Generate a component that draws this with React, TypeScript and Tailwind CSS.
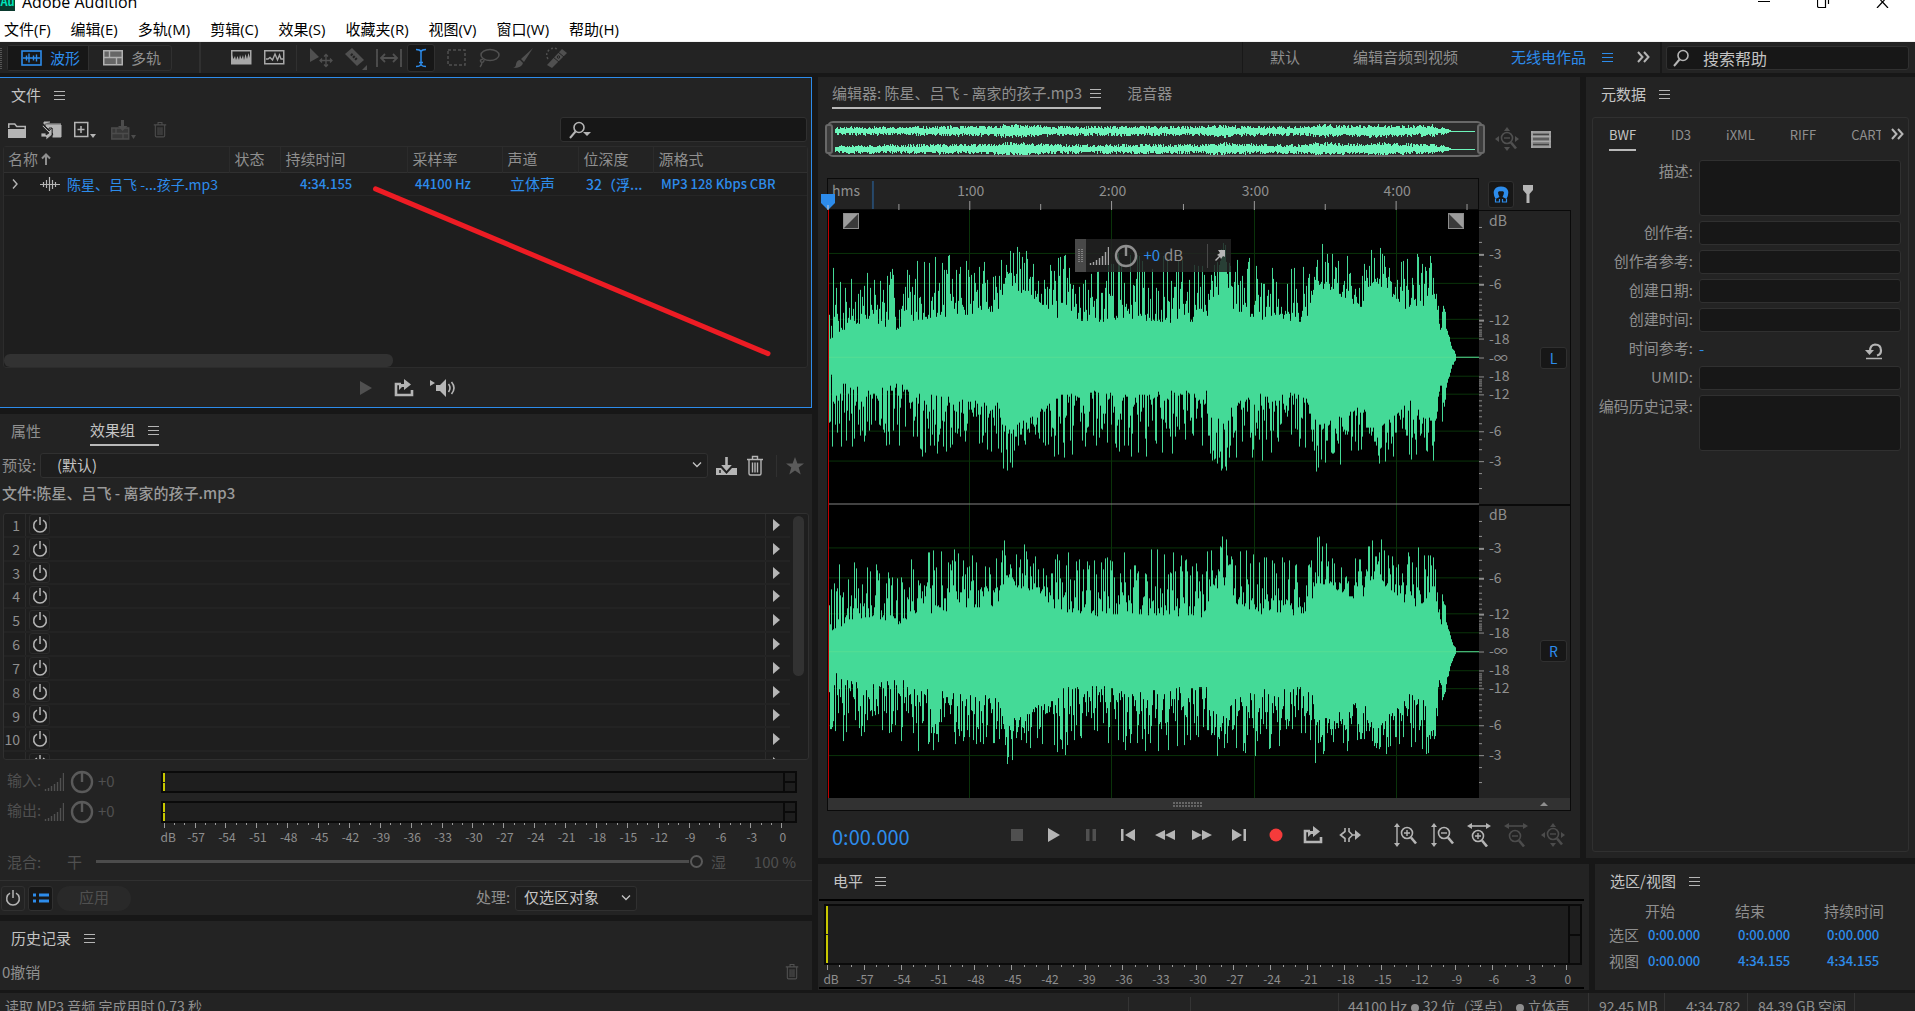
import { useMemo, type ReactNode } from "react";

const MENUS = ["文件(F)", "编辑(E)", "多轨(M)", "剪辑(C)", "效果(S)", "收藏夹(R)", "视图(V)", "窗口(W)", "帮助(H)"];

const WAVE_W = 651;
const WAVE_H = 589;
const CENTERS = [147, 442];
const DB_MARKS = [
  { label: "-3", off: -104 },
  { label: "-6", off: -74 },
  { label: "-12", off: -38 },
  { label: "-18", off: -19 },
  { label: "-∞", off: 0 },
  { label: "-18", off: 19 },
  { label: "-12", off: 37 },
  { label: "-6", off: 74 },
  { label: "-3", off: 104 },
];
const DB_MINOR = [131, 116, 92, 82, 66, 59, 53, 48, 43, 34, 31, 28, 26, 24, 22];
const MINUTES = [142, 284, 427, 569];

// [x, quiet level, peak level], measured from the channel's centre line
const ENVELOPE = [
  [0, 16, 66], [4, 18, 92], [12, 24, 92], [40, 34, 88], [72, 26, 90], [85, 36, 100],
  [120, 40, 104], [140, 42, 98], [170, 46, 98], [175, 66, 116], [180, 74, 116], [190, 62, 110],
  [197, 64, 114], [204, 58, 96], [222, 46, 92], [232, 36, 112], [250, 36, 92], [270, 34, 92],
  [282, 36, 104], [300, 38, 106], [340, 34, 100], [378, 34, 98], [382, 58, 112], [398, 66, 120],
  [404, 48, 100], [430, 36, 106], [446, 40, 100], [470, 34, 90], [484, 44, 94], [488, 68, 119],
  [496, 66, 112], [512, 60, 108], [526, 52, 96], [536, 48, 96], [541, 70, 112], [550, 72, 118],
  [556, 66, 106], [572, 54, 98], [582, 42, 106], [598, 50, 106], [606, 62, 106], [609, 44, 66],
  [611, 28, 44], [613, 26, 34], [614, 44, 72], [617, 38, 56], [618, 28, 34], [621, 18, 22], [624, 8, 11], [628, 1, 2],
];

function random(seed: number) {
  let s = seed;
  return () => {
    s = (s * 1664525 + 1013904223) % 4294967296;
    return s / 4294967296;
  };
}

function levelAt(x: number) {
  for (let i = 1; i < ENVELOPE.length; i++) {
    const a = ENVELOPE[i - 1];
    const b = ENVELOPE[i];
    if (x >= a[0] && x < b[0]) {
      const t = (x - a[0]) / (b[0] - a[0]);
      return [a[1] + (b[1] - a[1]) * t, a[2] + (b[2] - a[2]) * t];
    }
  }
  return [0, 0];
}

function buildWave(center: number, seed: number) {
  const next = random(seed);
  let d = "";
  for (let x = 0; x < 628; x++) {
    const [low, high] = levelAt(x);
    const up = low + (high - low) * Math.pow(next(), 1.6);
    const down = low + (high - low) * Math.pow(next(), 1.6);
    d += `M${x + 0.5} ${Math.round(center - up)}V${Math.round(center + down)}`;
  }
  return d;
}

function buildOverview(center: number, seed: number) {
  const next = random(seed);
  let d = "";
  for (let x = 0; x < 616; x++) {
    const [low, high] = levelAt(x + 8);
    const up = Math.round(low * 0.04 + high * 0.033 * next() + 0.6);
    const down = Math.round(low * 0.04 + high * 0.033 * next() + 0.6);
    d += `M${x + 0.5} ${center - up}V${center + down}`;
  }
  return d;
}

function Icon({ w = 20, h = 20, className = "", children }: { w?: number; h?: number; className?: string; children: ReactNode }) {
  return (
    <svg width={w} height={h} viewBox={`0 0 ${w} ${h}`} fill="none" stroke="currentColor" className={`shrink-0 ${className}`} aria-hidden="true">
      {children}
    </svg>
  );
}

function MenuButton({ className = "text-[#b5b5b5]" }: { className?: string }) {
  return (
    <button aria-label="菜单" className={`h-5 w-[11px] shrink-0 ${className}`}>
      <Icon w={11} h={20}>
        <path d="M0 6.5h11M0 10.5h11M0 14.5h11" />
      </Icon>
    </button>
  );
}

function PanelHeader({ title }: { title: string }) {
  return (
    <header className="flex h-9 shrink-0 items-center gap-[13px] pb-[2px] pl-[11px] text-[#c4c4c4]">
      <h2>{title}</h2>
      <MenuButton />
    </header>
  );
}

function Power() {
  return (
    <Icon w={16} h={18}>
      <path d="M5 4.2a6.3 6.3 0 1 0 6 0M8 1v8" strokeWidth="1.5" />
    </Icon>
  );
}

function Trash({ w = 18 }: { w?: number }) {
  return (
    <svg width={w} height={w + 3} viewBox="0 0 18 21" fill="none" stroke="currentColor" strokeWidth="1.4" aria-hidden="true">
      <path d="M1 4.5h16M6.5 4V1.5h5V4M3 5v13.5q0 1.5 1.5 1.5h9q1.5 0 1.5-1.5V5M6.5 7.5v10M9 7.5v10M11.5 7.5v10" />
    </svg>
  );
}

function Loop() {
  return (
    <Icon>
      <path d="M7 6H2v11h16v-5" strokeWidth="2.6" />
      <path d="M5 12V6h5V1l7 5.5L10 12V9H8z" fill="currentColor" stroke="none" />
    </Icon>
  );
}

function Bars() {
  return (
    <Icon w={20} h={18}>
      <path d="M1.5 18v-2M4.5 18v-3M7.5 18v-5M10.5 18v-7M13.5 18v-9M16.5 18V5M19.5 18V0" strokeWidth="1.4" />
    </Icon>
  );
}

function Knob() {
  return (
    <Icon w={24} h={24}>
      <circle cx="12" cy="12" r="10" strokeWidth="2.4" />
      <path d="M12 3v9" strokeWidth="2.4" />
    </Icon>
  );
}

function Glass({ minus, dir }: { minus?: boolean; dir: "v" | "h" | "all" }) {
  return (
    <Icon w={24} h={24}>
      {dir === "v" && (
        <>
          <path d="M4 3v18" strokeWidth="1.4" />
          <path d="M4 0l3 4H1zM4 24l3-4H1z" fill="currentColor" stroke="none" />
        </>
      )}
      {dir === "h" && (
        <>
          <path d="M3 3h18" strokeWidth="1.6" />
          <path d="M0 3l5-3v6zM24 3l-5-3v6z" fill="currentColor" stroke="none" />
        </>
      )}
      {dir === "all" && <path d="M12 0l3 4H9zM12 24l3-4H9zM0 12l4-3v6zM24 12l-4-3v6z" fill="currentColor" stroke="none" />}
      <g transform={dir === "v" ? "translate(2 -1)" : dir === "h" ? "translate(-1 2)" : "translate(0 0)"}>
        <circle cx="12" cy="11" r="5.500" strokeWidth="1.6" />
        <path d="M16 15.500l5 6" strokeWidth="2.6" />
        <path d={minus ? "M9 11h6" : "M9 11h6M12 8v6"} strokeWidth="1.4" />
      </g>
    </Icon>
  );
}

function Search({ arrow }: { arrow?: boolean }) {
  return (
    <Icon w={24} h={18}>
      <circle cx="10" cy="6.500" r="5" strokeWidth="1.6" />
      <path d="M6.500 10.500L1 17" strokeWidth="2" />
      {arrow && <path d="M14 11h8l-4 4z" fill="currentColor" stroke="none" />}
    </Icon>
  );
}

function DoubleChevron() {
  return (
    <Icon w={13} h={12}>
      <path d="M1 1l4.500 5L1 11M7 1l4.500 5L7 11" strokeWidth="2" />
    </Icon>
  );
}

function ToolButton({ label, children, className = "w-[33px] text-[#505050]" }: { label: string; children: ReactNode; className?: string }) {
  return (
    <button aria-label={label} className={`flex h-7 shrink-0 items-center justify-center ${className}`}>
      {children}
    </button>
  );
}

function TopBar() {
  return (
    <div className="h-[42px] shrink-0 overflow-hidden border-b border-[#f2f2f2] bg-white text-black">
      <div className="flex h-[14px] items-end">
        <span className="mb-[3px] flex h-[11px] w-[15px] items-end justify-center bg-[#0a3a2e] pb-1 text-[11px] leading-3 font-bold text-[#00e4bb]">Au</span>
        <h1 className="ml-[7px] flex-1 font-['Open_Sans','Noto_Sans',sans-serif] text-base leading-6">Adobe Audition</h1>
        <div className="flex h-[14px] items-start gap-[46px] pr-[26px]">
          <button aria-label="最小化">
            <Icon w={13} h={8}><path d="M0 1.500h12" /></Icon>
          </button>
          <button aria-label="最大化">
            <Icon w={13} h={8}><path d="M.5 0v6q0 1.500 1.500 1.500h6.500V0M11.500 0v4" strokeWidth="1.2" /></Icon>
          </button>
          <button aria-label="关闭">
            <Icon w={13} h={8}><path d="M4.500 0L6.500 2l2-2M6.500 2L1 8M6.500 2L12 8" strokeWidth="1.2" /></Icon>
          </button>
        </div>
      </div>
      <nav className="flex gap-5 pt-[3px] pl-1 font-['Open_Sans','Noto_Sans_CJK_SC',sans-serif] text-[15px] leading-[24px]">
        {MENUS.map((m) => (
          <button key={m}>{m}</button>
        ))}
      </nav>
    </div>
  );
}

function Toolbar() {
  return (
    <div className="flex h-[31px] shrink-0 items-center bg-[#232323] text-[#8f8f8f]">
      <Icon w={3} h={22} className="text-[#555]"><path d="M1 1v21" strokeWidth="2" strokeDasharray="1 1" /></Icon>
      <div className="ml-1 flex h-[26px] rounded-[3px] border border-[#303030]">
        <button className="flex w-[81px] items-center gap-2 border-r border-[#303030] bg-[#171717] pl-[13px] text-[#2d8ceb]">
          <Icon w={21} h={16}>
            <rect x="1" y="1" width="19" height="14" strokeWidth="1.6" />
            <path d="M2 8h17M5.500 5.500v5M8 3.500v9M12.500 5.500v5M15.500 4.500v7" strokeWidth="1.4" />
          </Icon>
          波形
        </button>
        <button className="flex w-[82px] items-center gap-2 pl-[14px]">
          <Icon w={20} h={16} className="text-[#b0b0b0]">
            <rect x=".75" y=".75" width="18.500" height="14" fill="#666" strokeWidth="1.5" />
            <path d="M1 7.500h18M6.500 1v6.500M13.500 7.500V15" strokeWidth="1.4" />
          </Icon>
          多轨
        </button>
      </div>
      <div className="ml-[27px] h-full w-[2px] bg-[#303030]" />
      <div className="ml-[24px] flex">
        <ToolButton label="波形显示" className="w-[33px] text-[#a8a8a8]">
          <Icon w={21} h={15}>
            <rect x=".75" y=".75" width="19" height="13" strokeWidth="1.5" />
            <path d="M1 14V5l1.500 4L4 6l1 4 1.500-4L8 10l1-5 1.500 4L12 5l1 5 1.500-6L16 9l1.500-6L19 8v6z" fill="currentColor" stroke="none" />
          </Icon>
        </ToolButton>
        <ToolButton label="频谱显示" className="w-[33px] text-[#a8a8a8]">
          <Icon w={21} h={15}>
            <rect x=".75" y=".75" width="19" height="13" strokeWidth="1.5" />
            <path d="M2 9h2l2-1.500L8.500 10l2.500-6 2.500 6 2-5L17 9h2" strokeWidth="1.4" />
          </Icon>
        </ToolButton>
      </div>
      <div className="mr-[7px] ml-[5px] h-[26px] w-px bg-[#303030]" />
      <div className="flex items-center">
        <ToolButton label="移动工具">
          <Icon w={24} h={22}>
            <path d="M1 1l9 9-9 5z" fill="currentColor" stroke="none" />
            <path d="M11 13.500h12M17 7.500v12M15 9.500l2-2 2 2M15 17.500l2 2 2-2M13 11.500l-2 2 2 2M21 11.500l2 2-2 2" strokeWidth="1.3" />
          </Icon>
        </ToolButton>
        <ToolButton label="切断工具" className="w-[35px] text-[#505050]">
          <Icon w={24} h={24}>
            <path d="M2 8l7-6 12 12-7 6z" fill="currentColor" stroke="none" />
            <path d="M8 8l6 6" stroke="#232323" strokeWidth="2.5" strokeDasharray="2 1" />
            <path d="M24 19v5h-5z" fill="currentColor" stroke="none" />
          </Icon>
        </ToolButton>
        <ToolButton label="滑动工具">
          <Icon w={26} h={20}>
            <path d="M1 1v18M25 1v18M5 10h16M9 6l-4 4 4 4M17 6l4 4-4 4" strokeWidth="1.8" />
          </Icon>
        </ToolButton>
        <ToolButton label="时间选择工具" className="mx-[2px] w-7 rounded-[3px] border border-[#303030] bg-[#171717] text-[#2d8ceb]">
          <Icon w={12} h={20}>
            <path d="M1 1.500q4 0 5 2 1-2 5-2M6 3v14M1 18.500q4 0 5-2 1 2 5 2M4 14.500h4" strokeWidth="1.5" />
          </Icon>
        </ToolButton>
        <ToolButton label="框选工具" className="w-10 text-[#505050]">
          <Icon w={20} h={18}><rect x="1" y="1" width="17" height="15" strokeWidth="1.5" strokeDasharray="3 2" /></Icon>
        </ToolButton>
        <ToolButton label="套索选择工具" className="w-6 text-[#505050]">
          <Icon w={22} h={20}>
            <ellipse cx="12" cy="7" rx="9" ry="5.500" strokeWidth="1.5" />
            <path d="M5 11q-4 1-2 3 3 1 3-2M4 14q0 3-2 5" strokeWidth="1.4" />
          </Icon>
        </ToolButton>
        <ToolButton label="画笔选择工具" className="w-11 text-[#505050]">
          <Icon w={22} h={22}>
            <path d="M21 1L12 15l-3-3zM8 13l3 3q-1 5-10 5 3-1 3-4 1-4 4-4z" fill="currentColor" stroke="none" />
          </Icon>
        </ToolButton>
        <ToolButton label="污点修复画笔工具" className="w-6 text-[#505050]">
          <Icon w={24} h={22}>
            <path d="M2 18L17 2l5 4L7 21z" fill="currentColor" stroke="none" />
            <path d="M8 10l6 5M13 5l6 5" stroke="#232323" />
            <circle cx="13.500" cy="10" r="1.2" stroke="#232323" />
            <path d="M3 12Q0 7 4 3q4-3 8-1" strokeDasharray="2 2" strokeWidth="1.5" />
          </Icon>
        </ToolButton>
      </div>
      <div className="flex-1" />
      <nav className="flex h-full items-center border-l border-[#181818] pb-[2px] pl-[27px]">
        <button>默认</button>
        <button className="ml-[53px]">编辑音频到视频</button>
        <button className="ml-[53px] text-[#2d8ceb]">无线电作品</button>
        <MenuButton className="ml-4 text-[#2d8ceb]" />
        <button aria-label="更多工作区" className="mr-[10px] ml-[24px] text-[#b5b5b5]"><DoubleChevron /></button>
      </nav>
      <div className="h-full w-[2px] bg-[#181818]" />
      <label className="mr-[6px] ml-1 flex h-6 w-[243px] items-center rounded-[3px] border border-[#303030] bg-[#171717] pl-[6px] text-[#b5b5b5]">
        <Search />
        <input aria-label="搜索帮助" placeholder="搜索帮助" className="ml-[6px] w-0 flex-1 bg-transparent text-base outline-none placeholder:text-[#c4c4c4]" />
      </label>
    </div>
  );
}

const FILE_COLS = [
  ["状态", "w-[51px]"],
  ["持续时间", "w-[127px]"],
  ["采样率", "w-[95px]"],
  ["声道", "w-[76px]"],
  ["位深度", "w-[75px]"],
  ["源格式", ""],
];

function FilesPanel() {
  return (
    <section className="relative flex h-[331px] shrink-0 flex-col border-y border-r border-[#2d8ceb] bg-[#232323]">
      <PanelHeader title="文件" />
      <div className="mt-[3px] flex h-[25px] shrink-0 items-center pr-1 pl-2 text-[#b5b5b5]">
        <button aria-label="打开文件">
          <Icon w={18} h={18}>
            <path d="M.75 7V3h6l2 2.500h8.500V8" strokeWidth="1.5" />
            <path d="M0 8h18v9H0z" fill="currentColor" stroke="none" />
          </Icon>
        </button>
        <button aria-label="导入文件" className="ml-[14px]">
          <Icon w={22} h={20}>
            <path d="M4 4V2h6M6 5h15v12h-9l2-3-8-8zM4 4h17" fill="currentColor" strokeWidth="1" />
            <path d="M1 6l8 6v-4h3v10H4" stroke="#232323" strokeWidth="1" fill="none" />
            <path d="M2 6l7 7-3 2v-2H1v4h5v3l6-5V8l-3 3-6-6z" fill="currentColor" stroke="#232323" strokeWidth=".8" />
          </Icon>
        </button>
        <button aria-label="新建文件" className="ml-3">
          <Icon w={22} h={18}>
            <path d="M.75 1.500h13v14h-13zM7 5v7M3.500 8.500h7" strokeWidth="1.5" />
            <path d="M16 13h6l-3 4z" fill="currentColor" stroke="none" />
          </Icon>
        </button>
        <button aria-label="插入到多轨混音中" className="ml-[15px] text-[#4c4c4c]">
          <Icon w={26} h={20}>
            <path d="M.75 8h17v11h-17zM1 13.500h17M12 13.500V19M5 8v5" fill="#383838" strokeWidth="1.4" />
            <path d="M7 6h3V0h3v6h3.500L11.500 11 7 6z" fill="currentColor" stroke="none" />
            <path d="M20 15h5l-2.500 4z" fill="currentColor" stroke="none" />
          </Icon>
        </button>
        <button aria-label="删除" className="ml-4 text-[#4c4c4c]"><Trash w={14} /></button>
        <label className="ml-auto flex h-[25px] w-[247px] items-center rounded-[3px] border border-[#303030] bg-[#171717] pl-2">
          <Search arrow />
          <input aria-label="搜索文件" className="w-0 flex-1 bg-transparent outline-none" />
        </label>
      </div>
      <div className="mx-[3px] mt-1 flex min-h-0 flex-1 flex-col rounded-[3px] border border-[#2c2c2c] bg-[#1e1e1e]">
        <table className="w-full table-fixed text-left whitespace-nowrap">
          <thead className="bg-[#232323] text-[#8f8f8f]">
            <tr className="h-[25px] border-b border-[#303030]">
              <th className="w-[225px] pl-1 font-normal">
                <span className="flex items-center gap-[3px]">
                  名称
                  <Icon w={10} h={12}><path d="M5 12V2M1 5.500L5 1.500l4 4" strokeWidth="2" /></Icon>
                </span>
              </th>
              {FILE_COLS.map(([label, width]) => (
                <th key={label} className={`border-l border-[#2b2b2b] pl-[5px] leading-5 font-normal ${width}`}>{label}</th>
              ))}
            </tr>
          </thead>
          <tbody className="text-[13px] text-[#2d8ceb]">
            <tr className="h-[23px] border-b border-[#262626] leading-5 font-medium">
              <td>
                <span className="flex items-center pl-2">
                  <Icon w={6} h={10} className="text-[#b5b5b5]"><path d="M1 .5L5 5 1 9.500" strokeWidth="1.4" /></Icon>
                  <Icon w={20} h={14} className="ml-[22px] text-[#b5b5b5]">
                    <path d="M0 7.500h20M3.500 5v5M6.500 3v8M9.500 0v14M12.500 3v9M15.500 5v5" strokeWidth="1.2" />
                  </Icon>
                  <span className="ml-[7px] text-sm leading-5 font-normal">陈星、吕飞 -...孩子.mp3</span>
                </span>
              </td>
              <td />
              <td className="pl-5">4:34.155</td>
              <td className="pl-2">44100 Hz</td>
              <td className="pl-2 text-[15px] font-normal">立体声</td>
              <td className="pl-2 text-sm">32（浮...</td>
              <td className="pl-2">MP3 128 Kbps CBR</td>
            </tr>
          </tbody>
        </table>
        <div className="mt-auto h-[13px] w-[389px] rounded-md bg-[#323232]" />
      </div>
      <div className="flex h-[39px] shrink-0 items-center justify-center gap-4 pl-1 text-[#b5b5b5]">
        <button aria-label="播放" className="mr-[6px] text-[#505050]">
          <Icon w={12} h={14}><path d="M0 0l12 7-12 7z" fill="currentColor" stroke="none" /></Icon>
        </button>
        <button aria-label="循环播放"><Loop /></button>
        <button aria-label="自动播放">
          <Icon w={26} h={18}>
            <path d="M0 1l5 3-5 3zM6 6h4l6-6v18l-6-6H6z" fill="currentColor" stroke="none" />
            <path d="M18.500 5q3 4 0 8M21.500 3q5 6 0 12" strokeWidth="1.6" />
          </Icon>
        </button>
      </div>
      <svg viewBox="0 0 812 331" className="pointer-events-none absolute inset-0" aria-hidden="true">
        <path d="M376 111L769 276" stroke="#ed1c24" strokeWidth="5" strokeLinecap="round" />
      </svg>
    </section>
  );
}

function Meter({ className }: { className: string }) {
  return (
    <div className={`flex border-2 border-[#0a0a0a] bg-[#1e1e1e] ${className}`}>
      <div className="flex w-[2px] flex-col gap-px">
        <span className="flex-1 bg-[#c8c800]" />
        <span className="flex-1 bg-[#c8c800]" />
      </div>
      <div className="flex-1" />
      <div className="flex w-3 flex-col border-l-2 border-[#0a0a0a]">
        <span className="flex-1 border-b-2 border-[#0a0a0a]" />
        <span className="flex-1" />
      </div>
    </div>
  );
}

function Scale({ start, end }: { start: number; end: number }) {
  const at = (db: number) => `${start + ((end - start) * (db + 60)) / 60}%`;
  const ticks = Array.from({ length: 61 }, (_, i) => i - 60);
  return (
    <svg className="block h-[22px] w-full overflow-visible" aria-hidden="true">
      {ticks.map((t) => (
        <line key={t} x1={at(t)} x2={at(t)} y1="0" y2={t % 3 === 0 ? 5 : 2} stroke="#9a9a9a" shapeRendering="crispEdges" />
      ))}
      {ticks.filter((t) => t % 3 === 0).map((t) => (
        <text key={t} x={at(t)} dx={t === -60 ? 4 : 1} y="19" textAnchor="middle" fontSize="12" fill="#8f8f8f">
          {t === -60 ? "dB" : t}
        </text>
      ))}
    </svg>
  );
}

function EffectsPanel() {
  return (
    <section className="flex min-h-0 flex-1 flex-col bg-[#232323] text-[#8f8f8f]">
      <header className="flex h-9 shrink-0 items-start pl-[11px]">
        <button className="mt-[3px] h-7">属性</button>
        <div className="mt-1 ml-[49px] flex h-7 items-center gap-[13px] border-b-2 border-[#b9b9b9] pb-[2px] text-[#c4c4c4]">
          <button>效果组</button>
          <MenuButton />
        </div>
      </header>
      <div className="mt-[3px] flex h-[25px] shrink-0 items-center pr-2 pl-[2px]">
        <label htmlFor="preset" className="w-[38px] pb-[2px]">预设:</label>
        <div className="relative flex-1">
          <select id="preset" className="h-[25px] w-full appearance-none rounded-[3px] border border-[#303030] bg-[#1e1e1e] pb-[2px] pl-4 text-[#c4c4c4]">
            <option>(默认)</option>
          </select>
          <Icon w={10} h={6} className="pointer-events-none absolute top-[9px] right-[6px] text-[#c4c4c4]"><path d="M1 .5l4 4 4-4" strokeWidth="1.3" /></Icon>
        </div>
        <button aria-label="保存预设" className="ml-2 text-[#b5b5b5]">
          <Icon w={21} h={20}>
            <path d="M0 12h5l5.500 6 5.500-6h5v7H0zM9.200 1h2.600v8h4l-5.300 6-5.300-6h4z" fill="currentColor" stroke="none" />
            <path d="M4 14v3" stroke="#232323" strokeWidth="1.5" />
          </Icon>
        </button>
        <button aria-label="删除预设" className="ml-[9px] text-[#b5b5b5]"><Trash /></button>
        <div className="ml-3 h-[22px] w-px bg-[#303030]" />
        <button aria-label="收藏" className="ml-[9px] text-[#5a5a5a]">
          <Icon w={18} h={18}><path d="M9 0l2.400 6.400H18l-5.300 4.200 2 6.900L9 13.400 3.300 17.500l2-6.900L0 6.400h6.600z" fill="currentColor" stroke="none" /></Icon>
        </button>
      </div>
      <p className="flex h-8 shrink-0 items-center pb-[2px] pl-[2px] font-medium text-[#9a9a9a]">文件:陈星、吕飞 - 离家的孩子.mp3</p>
      <div className="mx-[3px] mt-[3px] flex min-h-0 flex-1 rounded-[3px] border border-[#303030] bg-[#1e1e1e]">
        <div className="min-w-0 flex-1 overflow-hidden">
          <ol className="grid h-[262px] grid-rows-[repeat(11,1fr)]">
            {Array.from({ length: 11 }, (_, i) => (
              <li key={i} className="flex min-h-0 items-center border-b-2 border-[#232323]">
                <span className="h-full w-[22px] shrink-0 border-r border-[#2b2b2b] pr-[5px] text-right text-sm leading-[22px]">{i + 1}</span>
                <button aria-label={`切换效果 ${i + 1}`} className="ml-[3px] flex h-[21px] w-[21px] shrink-0 items-center justify-center rounded-[3px] border border-[#2b2b2b] text-[#b5b5b5]"><Power /></button>
                <span className="flex-1" />
                <button aria-label={`选择效果 ${i + 1}`} className="flex h-full w-[25px] items-center border-l border-[#2b2b2b] pl-[7px] text-[#b5b5b5]">
                  <Icon w={7} h={12}><path d="M0 0l7 6-7 6z" fill="currentColor" stroke="none" /></Icon>
                </button>
              </li>
            ))}
          </ol>
        </div>
        <div className="mt-[2px] mr-1 ml-[3px] h-40 w-[11px] rounded-md bg-[#323232]" />
      </div>
      <div className="mt-[11px] flex shrink-0 flex-col gap-2 pr-[15px] pl-[7px] text-[#505050]">
        {["输入:", "输出:"].map((label) => (
          <div key={label} className="flex h-[22px] items-center">
            <span className="w-[37px] pb-1">{label}</span>
            <Bars />
            <button aria-label={`${label}增益`} className="ml-[6px] text-[#5a5a5a]"><Knob /></button>
            <span className="ml-1 w-[63px] pb-[2px]">+0</span>
            <Meter className="h-[22px] flex-1" />
          </div>
        ))}
      </div>
      <div className="shrink-0 pr-[15px] pl-[161px]"><Scale start={0.5} end={97.6} /></div>
      <div className="flex h-[35px] shrink-0 items-center pr-[11px] pb-[2px] pl-[7px] text-[#505050]">
        <label htmlFor="mix" className="w-[60px]">混合:</label>
        <span>干</span>
        <input
          id="mix"
          type="range"
          defaultValue={100}
          disabled
          className="mr-2 ml-[14px] h-4 flex-1 appearance-none bg-[linear-gradient(#4c4c4c,#4c4c4c)] bg-[length:calc(100%-14px)_3px] bg-[position:left_center] bg-no-repeat [&::-webkit-slider-thumb]:size-[13px] [&::-webkit-slider-thumb]:appearance-none [&::-webkit-slider-thumb]:rounded-full [&::-webkit-slider-thumb]:border-2 [&::-webkit-slider-thumb]:border-[#5a5a5a] [&::-webkit-slider-thumb]:bg-[#232323]"
        />
        <span>湿</span>
        <span className="w-[75px] pr-[5px] text-right">100 %</span>
      </div>
      <footer className="flex h-[35px] shrink-0 items-center border-t border-[#303030] pl-[1px]">
        <button aria-label="电源" className="flex h-[25px] w-6 items-center justify-center rounded-[3px] border border-[#303030] text-[#b5b5b5]"><Power /></button>
        <button aria-label="效果列表" className="ml-[3px] flex h-[25px] w-[25px] items-center justify-center rounded-[3px] border border-[#303030] bg-[#171717] text-[#2d8ceb]">
          <Icon w={16} h={12}><path d="M0 3h3M6 3h10M0 9h3M6 9h10" strokeWidth="3" /></Icon>
        </button>
        <button disabled className="ml-1 h-[25px] w-[74px] rounded-full bg-[#292929] pb-[2px] text-[#505050]">应用</button>
        <label htmlFor="process" className="ml-auto w-[39px] pb-[2px]">处理:</label>
        <div className="relative mr-[175px] w-[122px]">
          <select id="process" className="h-[25px] w-full appearance-none rounded-[3px] border border-[#303030] bg-[#1e1e1e] pb-[2px] pl-2 text-[#c4c4c4]">
            <option>仅选区对象</option>
          </select>
          <Icon w={10} h={6} className="pointer-events-none absolute top-[9px] right-[6px] text-[#c4c4c4]"><path d="M1 .5l4 4 4-4" strokeWidth="1.3" /></Icon>
        </div>
      </footer>
    </section>
  );
}

function HistoryPanel() {
  return (
    <section className="h-[69px] shrink-0 bg-[#232323]">
      <PanelHeader title="历史记录" />
      <div className="flex h-[31px] items-center justify-between pr-[13px] pb-[2px] pl-[2px] text-[#8f8f8f]">
        <span>0撤销</span>
        <button aria-label="删除历史记录" className="text-[#505050]"><Trash w={14} /></button>
      </div>
    </section>
  );
}

function Overview() {
  const left = useMemo(() => buildOverview(8, 11), []);
  const right = useMemo(() => buildOverview(26, 37), []);
  return (
    <div className="relative h-9 min-w-0 flex-1 rounded-md border-2 border-[#686868] bg-[#2b2b2b] px-[6px]">
      <svg viewBox="0 0 640 32" preserveAspectRatio="none" className="h-full w-full" stroke="#6df5bb" shapeRendering="crispEdges" aria-hidden="true">
        <path d={`${left}M600 8.500H640`} />
        <path d={`${right}M600 26.500H640`} />
      </svg>
      <span className="absolute inset-y-[1px] -left-1 w-2 rounded-[3px] border-2 border-[#686868] bg-[#3c3c3c]" />
      <span className="absolute inset-y-[1px] -right-1 w-2 rounded-[3px] border-2 border-[#686868] bg-[#3c3c3c]" />
    </div>
  );
}

function Ruler() {
  const at = (x: number) => `${(x / WAVE_W) * 100}%`;
  return (
    <div className="relative h-8 min-w-0 flex-1 border border-[#0a0a0a]">
      <svg className="block h-full w-full overflow-visible" aria-hidden="true">
        <line x1={at(45)} x2={at(45)} y1="2" y2="30" stroke="#27496b" strokeWidth="2" />
        <text x="4" y="17" fontSize="14" fill="#8f8f8f">hms</text>
        {MINUTES.map((m, i) => (
          <g key={m}>
            <line x1={at(m)} x2={at(m)} y1="22" y2="31" stroke="#9a9a9a" strokeWidth="1" />
            <line x1={at(m - 71)} x2={at(m - 71)} y1="25" y2="31" stroke="#9a9a9a" />
            <text x={at(m)} y="17" dx="1" textAnchor="middle" fontSize="14" fill="#8f8f8f">{i + 1}:00</text>
          </g>
        ))}
        <line x1={at(640)} x2={at(640)} y1="25" y2="31" stroke="#9a9a9a" />
      </svg>
      <svg width="14" height="16" className="absolute top-[15px] -left-[7px]" aria-hidden="true">
        <path d="M0 0h14v9l-7 7-7-7z" fill="#2d8ceb" />
        <path d="M7 11v5" stroke="#ccc" />
      </svg>
    </div>
  );
}

function Waveform() {
  const waves = useMemo(() => [buildWave(CENTERS[0], 7), buildWave(CENTERS[1], 2024)], []);
  return (
    <svg viewBox={`0 0 ${WAVE_W} ${WAVE_H}`} preserveAspectRatio="none" className="absolute inset-0 h-full w-full bg-black" fill="none" aria-label="波形">
      {MINUTES.map((m) => (
        <path key={m} d={`M${m - 0.5} 0V${WAVE_H}`} stroke="#0a330a" />
      ))}
      {CENTERS.map((c, i) => (
        <g key={c}>
          {DB_MARKS.map((d) => (
            <path key={d.off} d={`M0 ${c + d.off + 0.5}H${WAVE_W}`} stroke="#0a330a" />
          ))}
          <path d={waves[i]} stroke="#44db98" shapeRendering="crispEdges" />
          <path d={`M0 ${c + 0.5}H${WAVE_W}`} stroke="#56df94" />
        </g>
      ))}
      <path d="M0 294.500H651" stroke="#858585" />
      <path d="M.5 0V589" stroke="#c00000" />
    </svg>
  );
}

function DbScale() {
  const at = (y: number) => `${(y / WAVE_H) * 100}%`;
  return (
    <svg className="absolute inset-0 h-full w-full" fill="#8f8f8f" fontSize="14" aria-hidden="true">
      {CENTERS.map((c) => (
        <g key={c}>
          <text x="10" y={at(c - 147)} dy="15">dB</text>
          {DB_MARKS.map((d) => (
            <g key={d.off}>
              <rect x="0" y={at(c + d.off)} width="5" height={Math.abs(d.off) > 20 && d.off < 0 ? 2 : 1} />
              <text x="10" y={at(c + d.off)} dy="5">{d.label}</text>
            </g>
          ))}
          {DB_MINOR.map((m) => (
            <g key={m}>
              <rect x="0" y={at(c - m)} width="3" height="1" />
              <rect x="0" y={at(c + m)} width="3" height="1" />
            </g>
          ))}
        </g>
      ))}
      <rect x="0" y={at(294)} width="100%" height="2" fill="#0a0a0a" />
    </svg>
  );
}

function FadeHandle({ flip, className }: { flip?: boolean; className: string }) {
  return (
    <button aria-label={flip ? "淡出" : "淡入"} className={`absolute top-[3px] size-4 border border-[#8c8c8c] bg-[#3a3a3a] ${className}`}>
      <svg viewBox="0 0 14 14" aria-hidden="true">
        <path d={flip ? "M0 0h14v14z" : "M0 0h14L0 14z"} fill="#9c9c9c" />
      </svg>
    </button>
  );
}

function Hud() {
  return (
    <div className="absolute top-[29px] left-[38%] flex h-[33px] w-[156px] items-center bg-[#232323]/85 text-[#8f8f8f]">
      <span className="flex h-full w-[11px] items-center justify-center bg-[#484848]">
        <Icon w={5} h={14} className="text-[#bbb]"><path d="M1 0v14M4 0v14" strokeDasharray="1 1" /></Icon>
      </span>
      <span className="ml-[3px] text-[#a5a5a5]"><Bars /></span>
      <button aria-label="调整振幅" className="ml-[5px]"><Knob /></button>
      <span className="ml-[5px] pb-[2px] text-[15px] text-[#2d8ceb]">+0</span>
      <span className="ml-1 pb-[2px] text-[15px]">dB</span>
      <span className="ml-auto h-6 w-px bg-[#484848]" />
      <button aria-label="固定" className="mr-[5px] ml-[6px] text-[#b5b5b5]">
        <Icon w={12} h={12}>
          <path d="M4 0h7v7l-2-1-2 3-1-2-4 4-1-1 4-4-2-1 3-2z" fill="currentColor" stroke="none" />
        </Icon>
      </button>
    </div>
  );
}

const TRANSPORT: { label: string; off?: boolean; icon: ReactNode }[] = [
  { label: "停止", off: true, icon: <Icon w={12} h={12}><path d="M0 0h12v12H0z" fill="currentColor" stroke="none" /></Icon> },
  { label: "播放", icon: <Icon w={12} h={14}><path d="M0 0l12 7-12 7z" fill="currentColor" stroke="none" /></Icon> },
  { label: "暂停", off: true, icon: <Icon w={12} h={12}><path d="M1 0h3.500v12H1zM7.500 0H11v12H7.500z" fill="currentColor" stroke="none" /></Icon> },
  { label: "上一个", icon: <Icon w={16} h={12}><path d="M1 0h2.500v12H1zM15 0v12L5 6z" fill="currentColor" stroke="none" /></Icon> },
  { label: "快退", icon: <Icon w={20} h={12}><path d="M10 1v10L0 6zM20 1v10L10 6z" fill="currentColor" stroke="none" /></Icon> },
  { label: "快进", icon: <Icon w={20} h={12}><path d="M0 1v10l10-5zM10 1v10l10-5z" fill="currentColor" stroke="none" /></Icon> },
  { label: "下一个", icon: <Icon w={16} h={12}><path d="M1 0v12l10-6zM12.500 0H15v12h-2.500z" fill="currentColor" stroke="none" /></Icon> },
  { label: "录制", icon: <Icon w={14} h={14}><circle cx="7" cy="7" r="6.500" fill="#f53b3b" stroke="none" /></Icon> },
  { label: "循环", icon: <Loop /> },
  {
    label: "跳过所选项目",
    icon: (
      <Icon w={22} h={16}>
        <path d="M6 1v3.500L1.500 8 6 11.500V15M10 1v3.500L13.500 8 10 11.500V15M13 8h4" strokeWidth="1.6" />
        <path d="M16 3l6 5-6 5z" fill="currentColor" stroke="none" />
      </Icon>
    ),
  },
];

const ZOOMS: { label: string; off?: boolean; icon: ReactNode }[] = [
  { label: "放大（振幅）", icon: <Glass dir="v" /> },
  { label: "缩小（振幅）", icon: <Glass dir="v" minus /> },
  { label: "放大（时间）", icon: <Glass dir="h" /> },
  { label: "缩小（时间）", off: true, icon: <Glass dir="h" minus /> },
  { label: "全部缩小", off: true, icon: <Glass dir="all" minus /> },
];

function EditorPanel() {
  return (
    <section className="flex min-w-0 flex-col bg-[#232323] px-[9px] text-[#8f8f8f]">
      <header className="flex h-8 shrink-0 items-end pl-[5px]">
        <div className="flex h-7 items-center gap-2 border-b-2 border-[#b9b9b9] pb-[2px]">
          <button>编辑器: 陈星、吕飞 - 离家的孩子.mp3</button>
          <MenuButton />
        </div>
        <button className="ml-[26px] h-7 pb-[4px]">混音器</button>
      </header>
      <div className="mt-3 flex shrink-0 items-center">
        <Overview />
        <button aria-label="全部缩小" className="ml-3 text-[#505050]"><Glass dir="all" minus /></button>
        <button aria-label="概览选项" className="mr-5 ml-3 text-[#a5a5a5]">
          <Icon w={20} h={17}>
            <path d="M0 0h20v17H0z" fill="#777" stroke="none" />
            <path d="M0 1h20M1 0v17M19 0v17M0 5.500h20M0 10.500h20M0 16h20" stroke="#a8a8a8" strokeWidth="1.5" />
            <path d="M2 3.500h16M2 8h16M2 13.500h16" stroke="#444" />
          </Icon>
        </button>
      </div>
      <div className="mt-[21px] flex shrink-0 items-center">
        <Ruler />
        <div className="flex w-[92px] items-center pl-[9px]">
          <button aria-label="切换对齐" className="flex h-[27px] w-[26px] items-center justify-center rounded-[3px] border border-[#303030] bg-[#171717]">
            <Icon w={16} h={17}>
              <path d="M4.500 12Q0 3 8 2.800 16 3 11.500 12" stroke="#2d8ceb" strokeWidth="4.4" />
              <path d="M2.500 13v3h4v-3M9.500 13v3h4v-3" stroke="#2d8ceb" strokeWidth="1.2" />
            </Icon>
          </button>
          <button aria-label="添加标记" className="ml-[9px] text-[#b5b5b5]">
            <Icon w={10} h={18}><path d="M0 0h10v5L6.500 9v9h-3V9L0 5z" fill="currentColor" stroke="none" /></Icon>
          </button>
        </div>
      </div>
      <div className="flex min-h-0 flex-1 flex-col border-r border-b border-l border-[#0a0a0a]">
        <div className="flex min-h-0 flex-1">
          <div className="relative min-w-0 flex-1">
            <Waveform />
            <FadeHandle className="left-[15px]" />
            <FadeHandle flip className="right-[15px]" />
            <Hud />
          </div>
          <div className="relative w-[91px] shrink-0 border-t border-[#0a0a0a]">
            <DbScale />
            <div className="relative flex h-full flex-col items-end pr-[3px] text-sm leading-5 text-[#2d8ceb]">
              {["L", "R"].map((ch) => (
                <div key={ch} className="flex flex-1 items-center">
                  <button className="h-[22px] w-[27px] rounded-[3px] border border-[#303030] bg-[#171717]">{ch}</button>
                </div>
              ))}
            </div>
          </div>
        </div>
        <div className="flex h-3 shrink-0 items-center justify-between bg-[#323232] pr-[22px]">
          <span className="w-2" />
          <Icon w={30} h={5} className="text-[#9a9a9a]"><path d="M0 1h30M0 4h30" strokeDasharray="2 1" /></Icon>
          <button aria-label="展开" className="text-[#8f8f8f]">
            <Icon w={8} h={4}><path d="M0 4l4-4 4 4z" fill="currentColor" stroke="none" /></Icon>
          </button>
        </div>
      </div>
      <div className="flex h-[47px] shrink-0 items-center text-[#b5b5b5]">
        <span className="mt-1 ml-[5px] text-xl text-[#2d8ceb]">0:00.000</span>
        <div className="ml-auto flex">
          {TRANSPORT.map((t) => (
            <button key={t.label} aria-label={t.label} className={`flex h-8 w-[37px] items-center justify-center ${t.off ? "text-[#505050]" : ""}`}>
              {t.icon}
            </button>
          ))}
        </div>
        <div className="ml-[18px] flex">
          {ZOOMS.map((z) => (
            <button key={z.label} aria-label={z.label} className={`flex h-8 w-[37px] items-center justify-center ${z.off ? "text-[#4c4c4c]" : ""}`}>
              {z.icon}
            </button>
          ))}
        </div>
      </div>
    </section>
  );
}

function Field({ id, label, tall }: { id: string; label: string; tall?: boolean }) {
  const box = "min-w-0 flex-1 resize-none rounded-[3px] border border-[#303030] bg-[#171717] px-1 outline-none";
  return (
    <div className="flex gap-[6px]">
      <label htmlFor={id} className="w-[100px] text-right leading-[22px]">{label}</label>
      {tall ? <textarea id={id} className={`h-14 ${box}`} /> : <input id={id} className={`h-6 ${box}`} />}
    </div>
  );
}

function MetadataPanel() {
  return (
    <section className="flex min-w-0 flex-col bg-[#232323] px-[6px] pb-[6px] text-[#8f8f8f]">
      <header className="flex h-9 shrink-0 items-center gap-[13px] pb-[2px] pl-[9px] text-[#c4c4c4]">
        <h2>元数据</h2>
        <MenuButton />
      </header>
      <div className="mt-1 flex-1 rounded-[3px] border border-[#303030]">
        <nav className="flex h-[42px] items-start pt-1 pl-4 text-[13px] leading-[26px]">
          <button className="h-[29px] border-b-2 border-[#b9b9b9] pb-px text-[#c4c4c4]">BWF</button>
          <button className="ml-[35px]">ID3</button>
          <button className="ml-[35px]">iXML</button>
          <button className="ml-[35px]">RIFF</button>
          <button className="ml-[35px] w-[30px] overflow-hidden text-left">CART</button>
          <button aria-label="更多" className="mt-[6px] mr-1 ml-auto text-[#b5b5b5]"><DoubleChevron /></button>
        </nav>
        <form className="flex flex-col gap-[5px] pr-[7px]">
          <Field id="desc" label="描述:" tall />
          <Field id="author" label="创作者:" />
          <Field id="author-ref" label="创作者参考:" />
          <Field id="date" label="创建日期:" />
          <Field id="time" label="创建时间:" />
          <div className="flex h-6 items-center gap-[6px]">
            <span className="w-[100px] pb-[2px] text-right">时间参考:</span>
            <span className="flex-1 text-[#2d8ceb]">-</span>
            <button type="button" aria-label="重置时间参考" className="mt-1 mr-[18px] text-[#b5b5b5]">
              <Icon w={18} h={17}>
                <path d="M5 8q0-6 5-6.500 6 0 6 6 0 4-4 5" strokeWidth="2.2" />
                <path d="M0 7h9l-4.500 5z" fill="currentColor" stroke="none" />
                <path d="M1 15.500h16" strokeWidth="1.5" />
              </Icon>
            </button>
          </div>
          <Field id="umid" label="UMID:" />
          <Field id="history" label="编码历史记录:" tall />
        </form>
      </div>
    </section>
  );
}

function LevelsPanel() {
  return (
    <section className="min-w-0 bg-[#232323] pr-[5px] pl-[1px]">
      <header className="flex h-[35px] items-center gap-3 pb-[2px] pl-[14px] text-[#c4c4c4]">
        <h2>电平</h2>
        <MenuButton />
      </header>
      <div className="border-y-2 border-black pt-[3px] pr-[2px] pl-[5px]">
        <Meter className="h-[61px]" />
        <Scale start={0.4} end={98} />
      </div>
    </section>
  );
}

function SelectionPanel() {
  return (
    <section className="min-w-0 bg-[#232323] text-[#8f8f8f]">
      <header className="flex h-9 items-center gap-[13px] pb-[2px] pl-[15px] text-[#c4c4c4]">
        <h2>选区/视图</h2>
        <MenuButton />
      </header>
      <table className="w-full table-fixed text-left">
        <thead>
          <tr className="h-[22px]">
            <th className="w-[50px]" />
            <th className="w-[90px] font-normal">开始</th>
            <th className="w-[89px] font-normal">结束</th>
            <th className="font-normal">持续时间</th>
          </tr>
        </thead>
        <tbody>
          {[["选区", "0:00.000", "0:00.000", "0:00.000"], ["视图", "0:00.000", "4:34.155", "4:34.155"]].map((row) => (
            <tr key={row[0]} className="h-[26px]">
              <th className="pl-[14px] font-normal">{row[0]}</th>
              {row.slice(1).map((v, i) => (
                <td key={i} className="pl-[3px] text-[13px] font-medium text-[#2d8ceb]">{v}</td>
              ))}
            </tr>
          ))}
        </tbody>
      </table>
    </section>
  );
}

function StatusBar() {
  return (
    <footer className="mt-[3px] flex h-[18px] shrink-0 overflow-hidden bg-[#232323] text-sm leading-[26px] whitespace-nowrap text-[#8f8f8f]">
      <span className="flex-1 pl-[5px]">读取 MP3 音频 完成用时 0.73 秒</span>
      <span className="mt-1 w-[62px] border-l border-[#343434]" />
      <span className="mt-1 w-[148px] border-l border-[#343434]" />
      <span className="flex w-[250px] items-baseline gap-1 border-l border-[#343434] pl-[9px]">
        44100 Hz <i className="size-2 rounded-full bg-[#8f8f8f]" /> 32 位（浮点） <i className="size-2 rounded-full bg-[#8f8f8f]" /> 立体声
      </span>
      <span className="w-[76px] border-l border-[#343434] pl-[10px]">92.45 MB</span>
      <span className="w-[83px] border-l border-[#343434] pl-[21px]">4:34.782</span>
      <span className="w-[107px] border-l border-[#343434] pl-[10px]">84.39 GB 空闲</span>
      <span className="w-[61px] border-l border-[#343434]" />
    </footer>
  );
}

export default function App() {
  return (
    <div className="flex h-screen flex-col overflow-hidden bg-[#171717] font-['Noto_Sans_CJK_SC',sans-serif] text-[15px] leading-5">
      <TopBar />
      <Toolbar />
      <main className="mt-1 grid min-h-0 flex-1 grid-cols-[812fr_1097fr] gap-[6px]">
        <div className="flex min-h-0 min-w-0 flex-col gap-[6px]">
          <FilesPanel />
          <EffectsPanel />
          <HistoryPanel />
        </div>
        <div className="flex min-h-0 min-w-0 flex-col gap-[6px]">
          <div className="grid min-h-0 flex-1 grid-cols-[762fr_329fr] gap-[6px]">
            <EditorPanel />
            <MetadataPanel />
          </div>
          <div className="grid h-[126px] shrink-0 grid-cols-[771fr_320fr] gap-[6px]">
            <LevelsPanel />
            <SelectionPanel />
          </div>
        </div>
      </main>
      <StatusBar />
    </div>
  );
}
